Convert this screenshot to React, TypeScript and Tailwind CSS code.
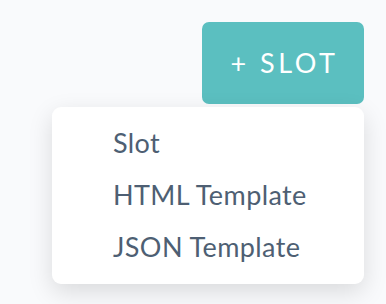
import React from "react";

export default function App() {
  const items = ["Slot", "HTML Template", "JSON Template"];
  return (
    <div
      className="relative w-[386px] h-[304px] bg-[#f9fafc] overflow-hidden"
      style={{ fontFamily: "Lato, 'Open Sans', sans-serif" }}
    >
      <div className="flex justify-end pt-[22px] pr-[22px]">
        <button className="w-[162px] h-[82px] rounded-[7px] bg-[#5bbfc0] text-white text-[27px] tracking-[0.13em] flex items-center justify-center pl-[3px]">
          + SLOT
        </button>
      </div>
      <div className="absolute left-[52px] top-[107px] w-[312px] h-[177px] bg-white rounded-[9px] shadow-[0_8px_24px_rgba(0,0,0,0.13)] pt-[10px]">
        {items.map((t) => (
          <div key={t} className="h-[52px] flex items-center pl-[61px] text-[27px] tracking-[0.015em] text-[#4e5f73]">
            {t}
          </div>
        ))}
      </div>
    </div>
  );
}
